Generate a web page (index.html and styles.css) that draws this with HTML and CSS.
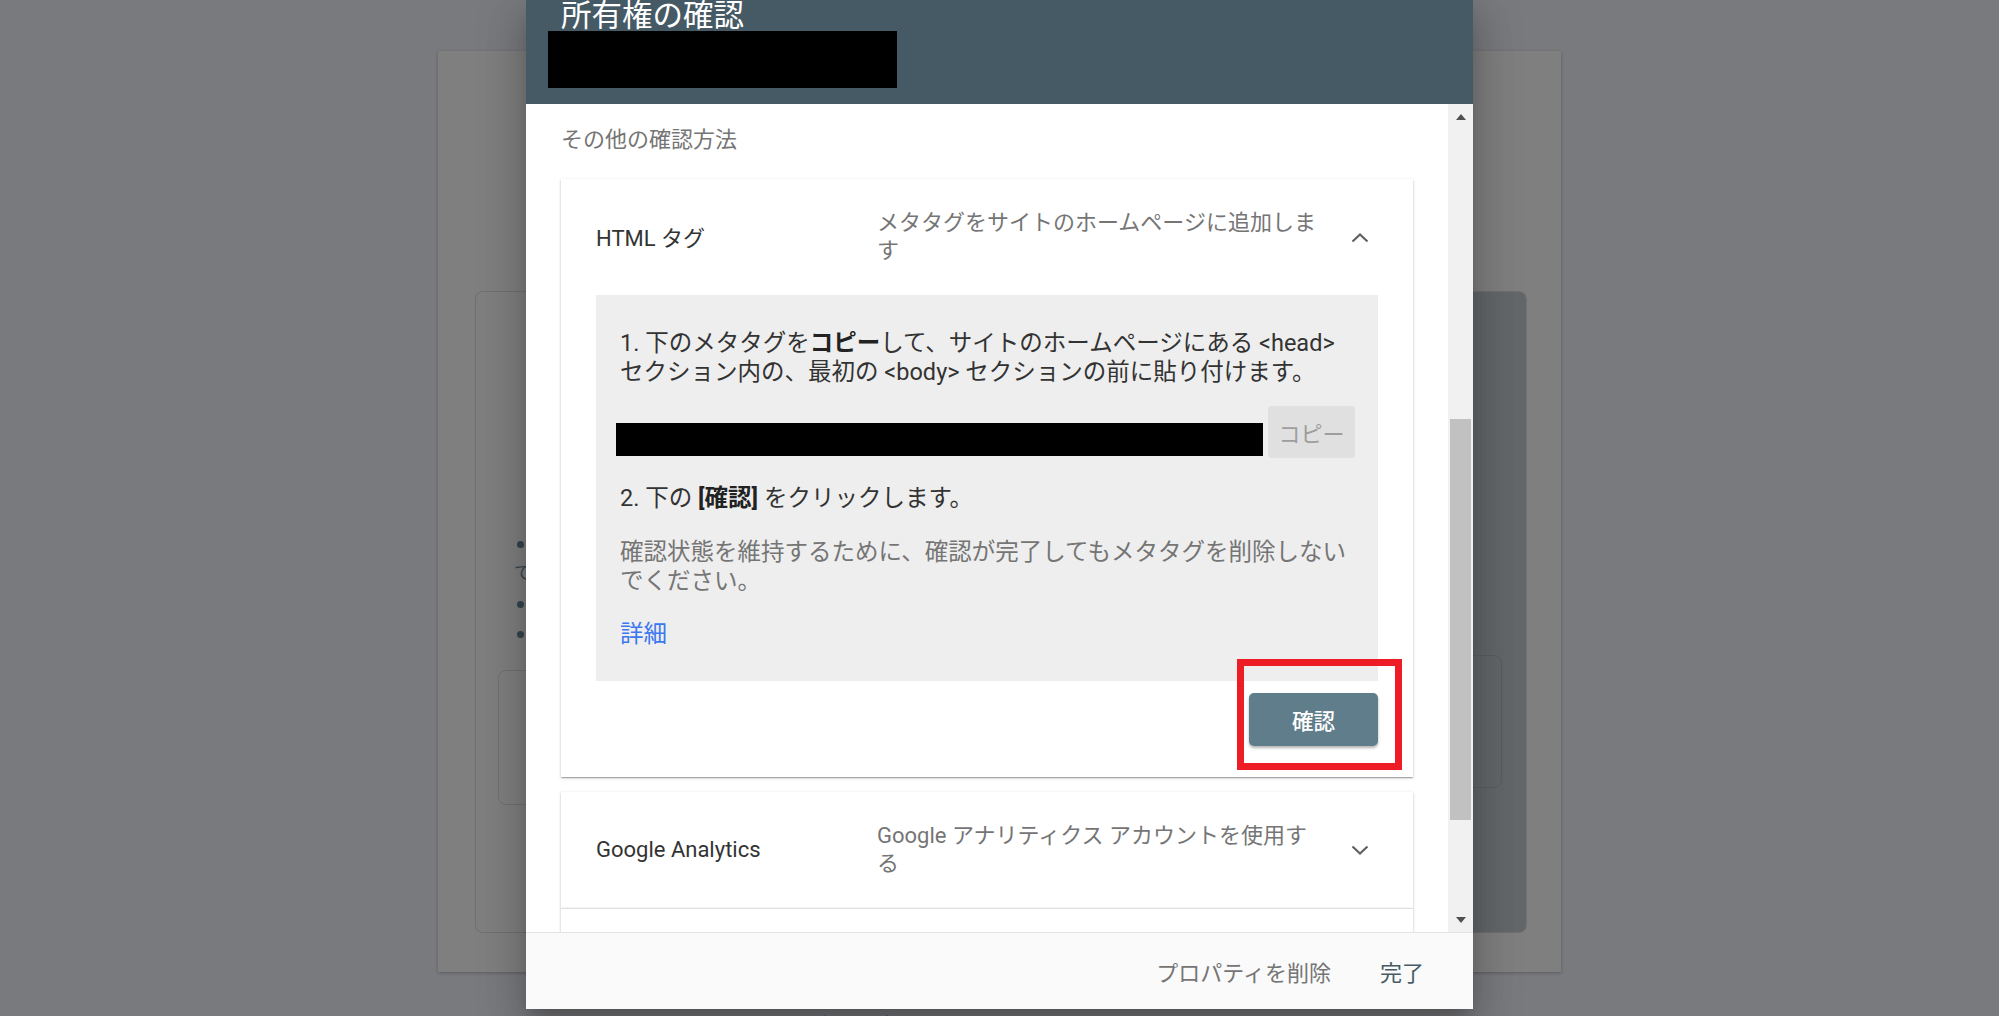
FILE: index.html
```html
<!DOCTYPE html>
<html lang="ja">
<head>
<meta charset="utf-8">
<title>所有権の確認</title>
<link rel="stylesheet" href="styles.css">
</head>
<body>
<div class="page-card">
  <div class="inner-card">
    <div class="inner-left">
      <ul class="bullets">
        <li><span class="dot"></span></li>
        <li class="wrapline"><span class="btxt2">で</span></li>
        <li><span class="dot"></span></li>
        <li><span class="dot"></span></li>
      </ul>
      <div class="inner-box"></div>
    </div>
    <div class="inner-right">
      <div class="ir-box"></div>
    </div>
  </div>
</div>
<div class="below-link">確認を表示しています</div>

<div class="dialog">
  <div class="dlg-header">
    <h1 class="dlg-title">所有権の確認</h1>
    <div class="redact-title"></div>
  </div>
  <div class="dlg-body">
    <div class="scroll-content">
      <div class="section-label">その他の確認方法</div>

      <div class="panel expanded">
        <div class="panel-head">
          <div class="panel-label">HTML タグ</div>
          <div class="panel-desc">メタタグをサイトのホームページに追加します</div>
          <svg class="chev" width="18" height="11" viewBox="0 0 18 11"><polyline points="1.5,9.5 9,2.5 16.5,9.5" fill="none" stroke="#616161" stroke-width="2.2"/></svg>
        </div>
        <div class="steps">
          <p class="step">1. 下のメタタグを<b>コピー</b>して、サイトのホームページにある &lt;head&gt; セクション内の、最初の &lt;body&gt; セクションの前に貼り付けます。</p>
          <div class="meta-row">
            <div class="redact-bar"></div>
            <div class="copy-btn">コピー</div>
          </div>
          <p class="step step2">2. 下の <b>[確認]</b> をクリックします。</p>
          <p class="note">確認状態を維持するために、確認が完了してもメタタグを削除しないでください。</p>
          <a class="more">詳細</a>
        </div>
        <div class="action-row">
          <span class="btn-wrap"><button class="verify-btn">確認</button></span>
        </div>
      </div>

      <div class="panel">
        <div class="panel-head">
          <div class="panel-label">Google Analytics</div>
          <div class="panel-desc">Google アナリティクス アカウントを使用する</div>
          <svg class="chev" width="18" height="11" viewBox="0 0 18 11"><polyline points="1.5,1.5 9,8.5 16.5,1.5" fill="none" stroke="#616161" stroke-width="2.2"/></svg>
        </div>
      </div>
      <div class="panel joined">
        <div class="panel-head"></div>
      </div>
    </div>
    <div class="scrollbar">
      <div class="sb-btn"><span class="tri-up"></span></div>
      <div class="sb-track"><div class="sb-thumb"></div></div>
      <div class="sb-btn"><span class="tri-down"></span></div>
    </div>
  </div>
  <div class="dlg-footer">
    <span class="foot-btn">プロパティを削除</span>
    <span class="foot-btn primary">完了</span>
  </div>
</div>
</body>
</html>
```
FILE: styles.css
```css
* { box-sizing: border-box; }
html, body {
  margin: 0;
  padding: 0;
}
body {
  width: 1999px;
  height: 1016px;
  overflow: hidden;
  position: relative;
  background: #797a7e;
  font-family: Roboto, "Noto Sans CJK JP", sans-serif;
  font-size: 22px;
  color: #333;
}

/* background page (dimmed) */
.page-card {
  margin: 51px 0 0 438px;
  width: 1123px;
  height: 921px;
  background: #7f7f7f;
  box-shadow: 0 1px 3px rgba(0,0,0,0.25);
  padding: 240px 34px 0 37px;
}
.inner-card {
  height: 642px;
  display: flex;
  border: 1px solid #707070;
  border-radius: 8px;
  overflow: hidden;
}
.inner-left {
  flex: 1;
  padding: 238px 0 0 0;
}
.bullets {
  list-style: none;
  margin: 0;
  padding: 0 0 0 41px;
}
.bullets li {
  display: flex;
  align-items: center;
  height: 29px;
  margin-bottom: 1px;
  white-space: nowrap;
  color: #2e3a42;
}
.bullets .dot {
  width: 7px;
  height: 7px;
  border-radius: 50%;
  background: #35444e;
  flex-shrink: 0;
}
.bullets .wrapline {
  margin-left: -3px;
  margin-top: -4px;
  margin-bottom: 5px;
  font-size: 18px;
  color: #3c4850;
}
.inner-box {
  margin: 21px 0 0 22px;
  height: 135px;
  border: 1px solid #717171;
  border-radius: 8px;
}
.inner-right {
  width: 300px;
  background: #636769;
  padding: 363px 24px 0 0;
}
.ir-box {
  height: 133px;
  border: 1px solid #5a5e61;
  border-radius: 8px;
}
.below-link {
  margin: 40px 0 0 810px;
  color: #1d3c72;
  white-space: nowrap;
  line-height: 29px;
}

/* dialog */
.dialog {
  position: absolute;
  left: 526px;
  top: 0;
  width: 947px;
  height: 1009px;
  background: #fff;
  display: flex;
  flex-direction: column;
  box-shadow: 0 11px 15px -7px rgba(0,0,0,0.2), 0 24px 38px 3px rgba(0,0,0,0.14), 0 9px 46px 8px rgba(0,0,0,0.12);
}
.dlg-header {
  height: 104px;
  flex-shrink: 0;
  background: #465a65;
  padding: 0 0 0 22px;
}
.dlg-title {
  margin: 0 0 0 13px;
  height: 31px;
  font-size: 30.5px;
  line-height: 31px;
  font-weight: 400;
  color: #fff;
  white-space: nowrap;
}
.redact-title {
  width: 349px;
  height: 57px;
  background: #000;
}
.dlg-body {
  flex: 1;
  display: flex;
  min-height: 0;
}
.scroll-content {
  flex: 1;
  overflow: hidden;
  padding: 21px 35px 0 35px;
}
.section-label {
  line-height: 29px;
  color: #757575;
}

.panel {
  background: #fff;
  box-shadow: 0 1px 3px rgba(0,0,0,0.2), 0 1px 1px rgba(0,0,0,0.14), 0 2px 1px -1px rgba(0,0,0,0.12);
}
.panel.expanded {
  margin: 25px 0 15px;
}
.panel.joined {
  border-top: 1px solid #e0e0e0;
}
.panel-head {
  display: flex;
  align-items: center;
  height: 116px;
  padding: 0 44px 0 35px;
}
.panel-label {
  width: 281px;
  flex-shrink: 0;
  color: #333;
  white-space: nowrap;
  margin-top: -2px;
}
.panel-desc {
  width: 448px;
  color: #757575;
  line-height: 28px;
}
.chev {
  margin-left: auto;
  display: block;
}

.steps {
  margin: 0 35px;
  background: #eeeeee;
  padding: 34px 23px 32px 24px;
}
.step {
  margin: 0;
  font-size: 23.5px;
  line-height: 29px;
  color: #333;
}
.step b { font-weight: 700; color: #222; }
.meta-row {
  display: flex;
  align-items: flex-end;
  margin-top: 19px;
}
.redact-bar {
  flex: 1;
  height: 33px;
  margin: 0 5px 2px -4px;
  background: #000;
}
.copy-btn {
  width: 87px;
  height: 52px;
  border-radius: 4px;
  background: #e0e0e0;
  color: #9e9e9e;
  display: flex;
  align-items: center;
  justify-content: center;
}
.step2 { margin-top: 26px; }
.note {
  margin: 25px 0 0;
  font-size: 23.5px;
  line-height: 29px;
  color: #757575;
}
.more {
  display: block;
  margin-top: 24px;
  line-height: 29px;
  font-size: 23.5px;
  color: #3b78f0;
}
.action-row {
  display: flex;
  justify-content: flex-end;
  padding: 12px 35px 31px;
}
.btn-wrap {
  position: relative;
  display: block;
}
.btn-wrap::after {
  content: "";
  position: absolute;
  top: -34px;
  left: -12px;
  right: -24px;
  bottom: -24px;
  border: 7px solid #ee1c25;
}
.verify-btn {
  display: block;
  width: 129px;
  height: 53px;
  border: none;
  border-radius: 5px;
  background: #607d8b;
  color: #fff;
  font-family: Roboto, "Noto Sans CJK JP", sans-serif;
  font-size: 21.6px;
  font-weight: 500;
  box-shadow: 0 2px 3px rgba(0,0,0,0.3);
}

/* scrollbar */
.scrollbar {
  width: 25px;
  flex-shrink: 0;
  background: #f1f1f1;
  display: flex;
  flex-direction: column;
}
.sb-btn {
  height: 25px;
  display: flex;
  align-items: center;
  justify-content: center;
}
.tri-up {
  width: 0;
  height: 0;
  border-left: 5px solid transparent;
  border-right: 5px solid transparent;
  border-bottom: 6px solid #505050;
}
.tri-down {
  width: 0;
  height: 0;
  border-left: 5px solid transparent;
  border-right: 5px solid transparent;
  border-top: 6px solid #505050;
}
.sb-track {
  flex: 1;
  padding: 290px 2px 0;
}
.sb-thumb {
  height: 401px;
  background: #c1c1c1;
}

/* footer */
.dlg-footer {
  height: 77px;
  flex-shrink: 0;
  background: #fafafa;
  border-top: 1px solid #e4e4e4;
  display: flex;
  align-items: center;
  justify-content: flex-end;
  gap: 49px;
  padding-right: 49px;
}
.foot-btn {
  color: #757575;
  white-space: nowrap;
}
.foot-btn.primary {
  color: #455a64;
}
```
